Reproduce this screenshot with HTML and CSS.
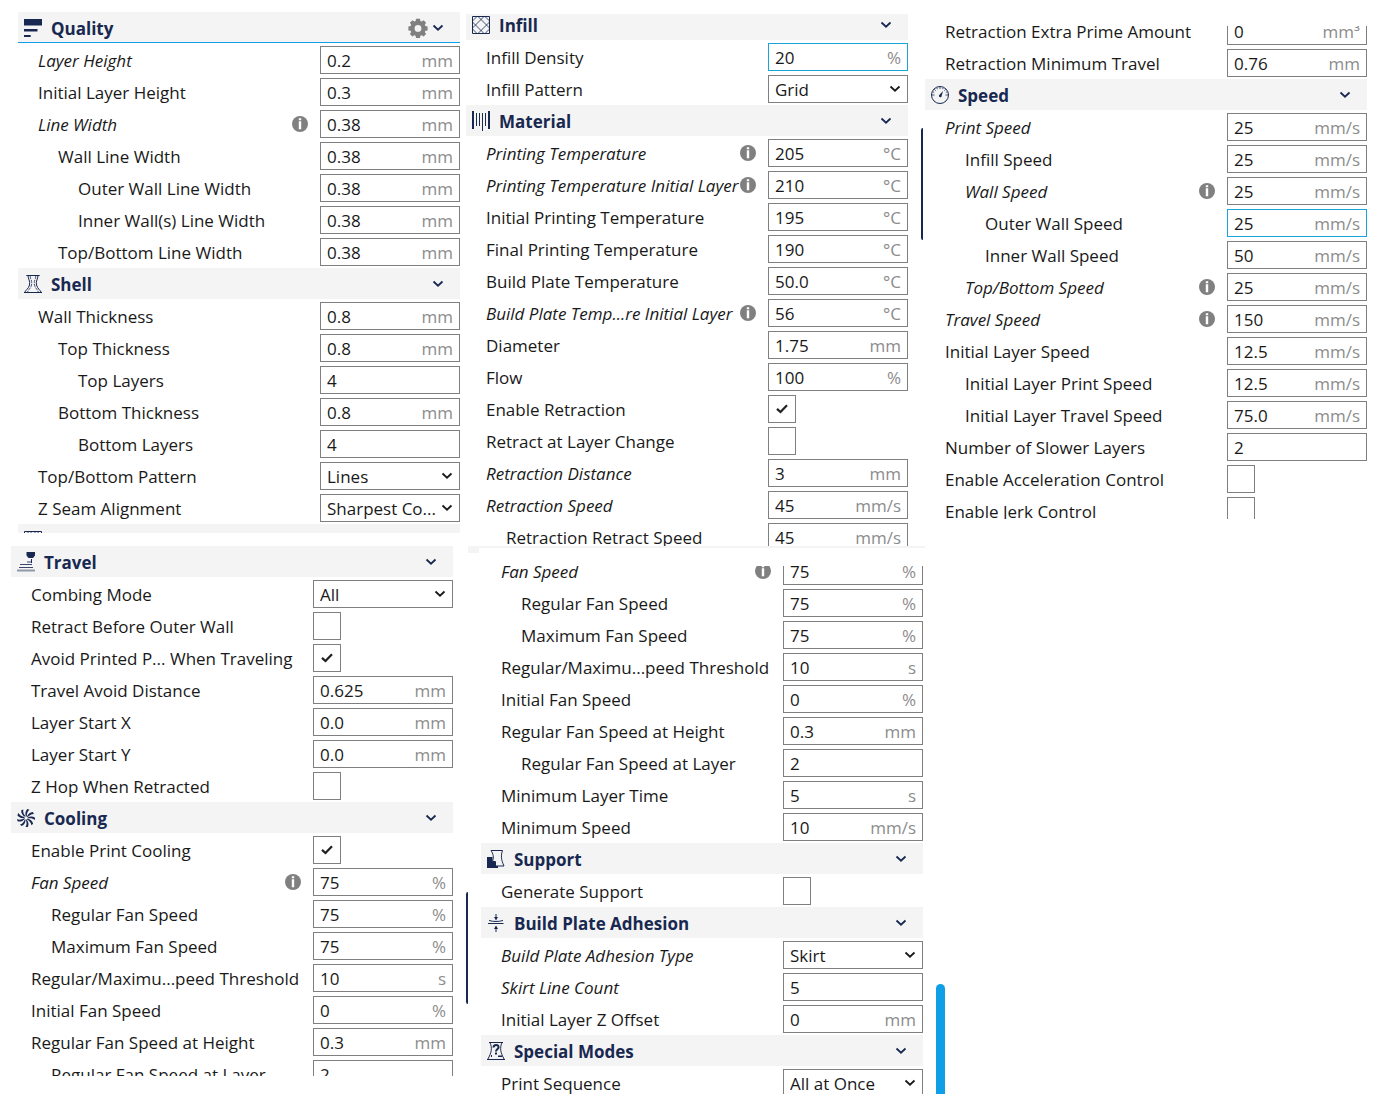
FILE: index.html
```html
<!DOCTYPE html>
<html lang="en">
<head>
<meta charset="utf-8">
<title>Print settings</title>
<link rel="stylesheet" href="styles.css">
</head>
<body>
<svg class="sprite" aria-hidden="true">
  <symbol id="chevron" viewBox="0 0 12 8"><path d="M1.500 1.500 6 5.700 10.500 1.500" fill="none" stroke="currentColor" stroke-width="1.800"/></symbol>
  <symbol id="check" viewBox="0 0 12 10"><path d="M1 4.800 4.500 8 11 1.200" fill="none" stroke="#222" stroke-width="2.300"/></symbol>
  <symbol id="info" viewBox="0 0 16 16"><circle cx="8" cy="8" r="8" fill="#808080"/><path d="M6.800 2.300h2.400v2H6.800zM6.800 5.300h2.400v8H6.800z" fill="#fff"/></symbol>
  <symbol id="gear" viewBox="0 0 20 20"><path fill="#808080" fill-rule="evenodd" d="M8 .8h4l.4 2.200 1.300.6 1.900-1.300 2.500 2.500-1.300 1.900.6 1.300 2.200.4v4l-2.200.4-.6 1.300 1.300 1.900-2.500 2.500-1.900-1.300-1.300.6-.4 2.200H8l-.4-2.200-1.300-.6-1.900 1.300L1.900 16l1.300-1.900-.6-1.300-2.200-.4v-4L2.600 8l.6-1.300L1.900 4.800l2.500-2.500 1.900 1.300L7.600 3zM10 7a3.400 3.400 0 1 0 0 6.800A3.400 3.400 0 0 0 10 7z"/></symbol>
  <symbol id="quality" viewBox="0 0 18 18"><path fill="currentColor" d="M0 0h18v6.500H0zM0 10h13.500v2.500H0zM0 16h6.700v2H0z"/></symbol>
  <symbol id="shell" viewBox="0 0 18 18"><g fill="none" stroke="currentColor"><path d="M2.300.5h13.400M0 17.500h18"/><path d="M4 .5C4 4 6.500 6 5.500 10S1.500 15 .7 17.500M14 .5c0 3.500-2.500 5.500-1.500 9.500s4 5 4.800 7.500"/><path d="M6.200 1c0 3 2.300 5 1.300 9S4.500 14 3.700 17M11.800 1c0 3-2.300 5-1.300 9s3 4 3.800 7" stroke-width=".8" stroke-dasharray="3 1"/></g></symbol>
  <symbol id="infill" viewBox="0 0 18 18"><g fill="none" stroke="currentColor"><path d="M.5.5h17v17H.5z"/><path d="M0 5.500 5.500 0M0 12.500 12.500 0M5.500 18 18 5.500M12.500 18 18 12.500M12.500 0 18 5.500M5.500 0 18 12.500M0 5.500 12.500 18M0 12.500 5.500 18" stroke-width=".8"/></g></symbol>
  <symbol id="material" viewBox="0 0 18 20"><path fill="currentColor" d="M0 0h2v18H0zM4 2h1v13H4zM7 2h1v13H7zM10 2h1v18h-1zM13 2h1v13h-1zM16 0h2v18h-2z"/></symbol>
  <symbol id="speed" viewBox="0 0 18 18"><g fill="none" stroke="currentColor"><circle cx="9" cy="9" r="8.500"/><path d="M9 1v2M1 9h2.500M14.500 9H17M3.300 3.300l1.400 1.400M14.700 3.300l-1.400 1.400M5.800 1.800l.5 1.400M12.200 1.800l-.5 1.400M1.800 5.800l1.400.5M16.200 5.800l-1.400.5" stroke-width=".8"/></g><path fill="currentColor" d="m12 5-1.300 4.800a1.400 1.400 0 1 1-2.200-1z"/></symbol>
  <symbol id="travel" viewBox="0 0 18 20"><path fill="currentColor" d="M9.500 0H18v3.500L16 6h-4.500l-2-2.500zM14 7h1v4h-1z"/><path fill="currentColor" d="M10 9.500h4v1h-4zM3 12h12v1H3zM2 15h14v1H2z" opacity=".85"/><path fill="currentColor" d="M0 17.500h18v2H0z" opacity=".45"/></symbol>
  <symbol id="cooling" viewBox="0 0 18 18"><path id="blade" fill="currentColor" d="M9 7.500C7.800 4.800 8.300 2 10.300 0l2.200.7C10.400 2.300 9.700 4.600 9.800 7.500z"/><use href="#blade" transform="rotate(40 9 9)"/><use href="#blade" transform="rotate(80 9 9)"/><use href="#blade" transform="rotate(120 9 9)"/><use href="#blade" transform="rotate(160 9 9)"/><use href="#blade" transform="rotate(200 9 9)"/><use href="#blade" transform="rotate(240 9 9)"/><use href="#blade" transform="rotate(280 9 9)"/><use href="#blade" transform="rotate(320 9 9)"/></symbol>
  <symbol id="support" viewBox="0 0 18 18"><path fill="currentColor" d="M0 7h5.500v4.500H8V16h3v2H0z"/><path fill="#f4f4f4" stroke="currentColor" d="M4 .5h11.500c-1.700 5-1.500 9 1.500 15.500H8.500v-4.500H5.500C7 7 6.300 4 4 .5z"/></symbol>
  <symbol id="adhesion" viewBox="0 0 18 18"><path fill="currentColor" d="M8.500 0h1v3H11L9 6.500 7 3h1.500zM8.500 18h1v-3H11L9 11.500 7 15h1.500z"/><path fill="none" stroke="currentColor" d="M2 6.500c4 1.300 10 1.300 14 0M1 9.500h15.500"/></symbol>
  <symbol id="special" viewBox="0 0 18 18"><g fill="none" stroke="currentColor"><path d="M2 .5h14M0 17.500h18"/><path d="M3 .5C5.500 6.500 4.500 10.500.7 17.500M15 .5c-2.500 6-1.500 10 2.300 17"/><path d="M6.500 5.500C6.500 2 12 2 11.500 5.500 11.200 7.500 9 7.200 9 9.500" stroke-width="2"/></g><path fill="currentColor" d="M8 10.500h2v2H8zM4 13h1v2H4zM11 13.500h4V15h-4z"/></symbol>
</svg>

<main class="page">
  <div class="column column-left">
    <div class="pane pane-quality">
      <form class="list">
        <header class="section active"><svg class="icon"><use href="#quality"/></svg><h2>Quality</h2><button type="button" class="gear" aria-label="Configure"><svg><use href="#gear"/></svg></button><button type="button" class="toggle" aria-label="Collapse"><svg><use href="#chevron"/></svg></button></header>
        <label class="row changed"><span class="name">Layer Height</span><span class="field"><input value="0.2"><span class="unit">mm</span></span></label>
        <label class="row"><span class="name">Initial Layer Height</span><span class="field"><input value="0.3"><span class="unit">mm</span></span></label>
        <label class="row changed"><span class="name">Line Width</span><svg class="info"><use href="#info"/></svg><span class="field"><input value="0.38"><span class="unit">mm</span></span></label>
        <label class="row sub"><span class="name">Wall Line Width</span><span class="field"><input value="0.38"><span class="unit">mm</span></span></label>
        <label class="row subsub"><span class="name">Outer Wall Line Width</span><span class="field"><input value="0.38"><span class="unit">mm</span></span></label>
        <label class="row subsub"><span class="name">Inner Wall(s) Line Width</span><span class="field"><input value="0.38"><span class="unit">mm</span></span></label>
        <label class="row sub"><span class="name">Top/Bottom Line Width</span><span class="field"><input value="0.38"><span class="unit">mm</span></span></label>
        <header class="section"><svg class="icon"><use href="#shell"/></svg><h2>Shell</h2><button type="button" class="toggle" aria-label="Collapse"><svg><use href="#chevron"/></svg></button></header>
        <label class="row"><span class="name">Wall Thickness</span><span class="field"><input value="0.8"><span class="unit">mm</span></span></label>
        <label class="row sub"><span class="name">Top Thickness</span><span class="field"><input value="0.8"><span class="unit">mm</span></span></label>
        <label class="row subsub"><span class="name">Top Layers</span><span class="field"><input value="4"></span></label>
        <label class="row sub"><span class="name">Bottom Thickness</span><span class="field"><input value="0.8"><span class="unit">mm</span></span></label>
        <label class="row subsub"><span class="name">Bottom Layers</span><span class="field"><input value="4"></span></label>
        <label class="row"><span class="name">Top/Bottom Pattern</span><span class="field"><select><option>Lines</option></select><svg class="arrow"><use href="#chevron"/></svg></span></label>
        <label class="row"><span class="name">Z Seam Alignment</span><span class="field"><select><option>Sharpest Co...</option></select><svg class="arrow"><use href="#chevron"/></svg></span></label>
        <header class="section"><svg class="icon"><use href="#infill"/></svg></header>
      </form>
    </div>

    <div class="pane pane-travel">
      <form class="list">
        <header class="section"><svg class="icon tall"><use href="#travel"/></svg><h2>Travel</h2><button type="button" class="toggle" aria-label="Collapse"><svg><use href="#chevron"/></svg></button></header>
        <label class="row"><span class="name">Combing Mode</span><span class="field"><select><option>All</option></select><svg class="arrow"><use href="#chevron"/></svg></span></label>
        <label class="row"><span class="name">Retract Before Outer Wall</span><span class="field"><input type="checkbox"><svg class="tick"><use href="#check"/></svg></span></label>
        <label class="row"><span class="name">Avoid Printed P... When Traveling</span><span class="field"><input type="checkbox" checked><svg class="tick"><use href="#check"/></svg></span></label>
        <label class="row"><span class="name">Travel Avoid Distance</span><span class="field"><input value="0.625"><span class="unit">mm</span></span></label>
        <label class="row"><span class="name">Layer Start X</span><span class="field"><input value="0.0"><span class="unit">mm</span></span></label>
        <label class="row"><span class="name">Layer Start Y</span><span class="field"><input value="0.0"><span class="unit">mm</span></span></label>
        <label class="row"><span class="name">Z Hop When Retracted</span><span class="field"><input type="checkbox"><svg class="tick"><use href="#check"/></svg></span></label>
        <header class="section"><svg class="icon"><use href="#cooling"/></svg><h2>Cooling</h2><button type="button" class="toggle" aria-label="Collapse"><svg><use href="#chevron"/></svg></button></header>
        <label class="row"><span class="name">Enable Print Cooling</span><span class="field"><input type="checkbox" checked><svg class="tick"><use href="#check"/></svg></span></label>
        <label class="row changed"><span class="name">Fan Speed</span><svg class="info"><use href="#info"/></svg><span class="field"><input value="75"><span class="unit">%</span></span></label>
        <label class="row sub"><span class="name">Regular Fan Speed</span><span class="field"><input value="75"><span class="unit">%</span></span></label>
        <label class="row sub"><span class="name">Maximum Fan Speed</span><span class="field"><input value="75"><span class="unit">%</span></span></label>
        <label class="row"><span class="name">Regular/Maximu...peed Threshold</span><span class="field"><input value="10"><span class="unit">s</span></span></label>
        <label class="row"><span class="name">Initial Fan Speed</span><span class="field"><input value="0"><span class="unit">%</span></span></label>
        <label class="row"><span class="name">Regular Fan Speed at Height</span><span class="field"><input value="0.3"><span class="unit">mm</span></span></label>
        <label class="row sub"><span class="name">Regular Fan Speed at Layer</span><span class="field"><input value="2"></span></label>
      </form>
      <div class="thumb"></div>
    </div>
  </div>

  <div class="column column-middle">
    <div class="pane pane-material">
      <form class="list">
        <header class="section"><svg class="icon"><use href="#infill"/></svg><h2>Infill</h2><button type="button" class="toggle" aria-label="Collapse"><svg><use href="#chevron"/></svg></button></header>
        <label class="row"><span class="name">Infill Density</span><span class="field hover"><input value="20"><span class="unit">%</span></span></label>
        <label class="row"><span class="name">Infill Pattern</span><span class="field"><select><option>Grid</option></select><svg class="arrow"><use href="#chevron"/></svg></span></label>
        <header class="section"><svg class="icon tall"><use href="#material"/></svg><h2>Material</h2><button type="button" class="toggle" aria-label="Collapse"><svg><use href="#chevron"/></svg></button></header>
        <label class="row changed"><span class="name">Printing Temperature</span><svg class="info"><use href="#info"/></svg><span class="field"><input value="205"><span class="unit">°C</span></span></label>
        <label class="row changed"><span class="name">Printing Temperature Initial Layer</span><svg class="info"><use href="#info"/></svg><span class="field"><input value="210"><span class="unit">°C</span></span></label>
        <label class="row"><span class="name">Initial Printing Temperature</span><span class="field"><input value="195"><span class="unit">°C</span></span></label>
        <label class="row"><span class="name">Final Printing Temperature</span><span class="field"><input value="190"><span class="unit">°C</span></span></label>
        <label class="row"><span class="name">Build Plate Temperature</span><span class="field"><input value="50.0"><span class="unit">°C</span></span></label>
        <label class="row changed"><span class="name">Build Plate Temp...re Initial Layer</span><svg class="info"><use href="#info"/></svg><span class="field"><input value="56"><span class="unit">°C</span></span></label>
        <label class="row"><span class="name">Diameter</span><span class="field"><input value="1.75"><span class="unit">mm</span></span></label>
        <label class="row"><span class="name">Flow</span><span class="field"><input value="100"><span class="unit">%</span></span></label>
        <label class="row"><span class="name">Enable Retraction</span><span class="field"><input type="checkbox" checked><svg class="tick"><use href="#check"/></svg></span></label>
        <label class="row"><span class="name">Retract at Layer Change</span><span class="field"><input type="checkbox"><svg class="tick"><use href="#check"/></svg></span></label>
        <label class="row changed"><span class="name">Retraction Distance</span><span class="field"><input value="3"><span class="unit">mm</span></span></label>
        <label class="row changed"><span class="name">Retraction Speed</span><span class="field"><input value="45"><span class="unit">mm/s</span></span></label>
        <label class="row sub"><span class="name">Retraction Retract Speed</span><span class="field"><input value="45"><span class="unit">mm/s</span></span></label>
      </form>
      <div class="thumb"></div>
    </div>

    <div class="seam"></div>

    <div class="pane pane-support">
      <form class="list">
        <label class="row changed"><span class="name">Fan Speed</span><svg class="info"><use href="#info"/></svg><span class="field"><input value="75"><span class="unit">%</span></span></label>
        <label class="row sub"><span class="name">Regular Fan Speed</span><span class="field"><input value="75"><span class="unit">%</span></span></label>
        <label class="row sub"><span class="name">Maximum Fan Speed</span><span class="field"><input value="75"><span class="unit">%</span></span></label>
        <label class="row"><span class="name">Regular/Maximu...peed Threshold</span><span class="field"><input value="10"><span class="unit">s</span></span></label>
        <label class="row"><span class="name">Initial Fan Speed</span><span class="field"><input value="0"><span class="unit">%</span></span></label>
        <label class="row"><span class="name">Regular Fan Speed at Height</span><span class="field"><input value="0.3"><span class="unit">mm</span></span></label>
        <label class="row sub"><span class="name">Regular Fan Speed at Layer</span><span class="field"><input value="2"></span></label>
        <label class="row"><span class="name">Minimum Layer Time</span><span class="field"><input value="5"><span class="unit">s</span></span></label>
        <label class="row"><span class="name">Minimum Speed</span><span class="field"><input value="10"><span class="unit">mm/s</span></span></label>
        <header class="section"><svg class="icon"><use href="#support"/></svg><h2>Support</h2><button type="button" class="toggle" aria-label="Collapse"><svg><use href="#chevron"/></svg></button></header>
        <label class="row"><span class="name">Generate Support</span><span class="field"><input type="checkbox"><svg class="tick"><use href="#check"/></svg></span></label>
        <header class="section"><svg class="icon"><use href="#adhesion"/></svg><h2>Build Plate Adhesion</h2><button type="button" class="toggle" aria-label="Collapse"><svg><use href="#chevron"/></svg></button></header>
        <label class="row changed"><span class="name">Build Plate Adhesion Type</span><span class="field"><select><option>Skirt</option></select><svg class="arrow"><use href="#chevron"/></svg></span></label>
        <label class="row changed"><span class="name">Skirt Line Count</span><span class="field"><input value="5"></span></label>
        <label class="row"><span class="name">Initial Layer Z Offset</span><span class="field"><input value="0"><span class="unit">mm</span></span></label>
        <header class="section"><svg class="icon"><use href="#special"/></svg><h2>Special Modes</h2><button type="button" class="toggle" aria-label="Collapse"><svg><use href="#chevron"/></svg></button></header>
        <label class="row"><span class="name">Print Sequence</span><span class="field"><select><option>All at Once</option></select><svg class="arrow"><use href="#chevron"/></svg></span></label>
      </form>
      <div class="thumb"></div>
    </div>
  </div>

  <div class="column column-right">
    <div class="pane pane-speed">
      <form class="list">
        <label class="row"><span class="name">Retraction Extra Prime Amount</span><span class="field"><input value="0"><span class="unit">mm³</span></span></label>
        <label class="row"><span class="name">Retraction Minimum Travel</span><span class="field"><input value="0.76"><span class="unit">mm</span></span></label>
        <header class="section"><svg class="icon"><use href="#speed"/></svg><h2>Speed</h2><button type="button" class="toggle" aria-label="Collapse"><svg><use href="#chevron"/></svg></button></header>
        <label class="row changed"><span class="name">Print Speed</span><span class="field"><input value="25"><span class="unit">mm/s</span></span></label>
        <label class="row sub"><span class="name">Infill Speed</span><span class="field"><input value="25"><span class="unit">mm/s</span></span></label>
        <label class="row sub changed"><span class="name">Wall Speed</span><svg class="info"><use href="#info"/></svg><span class="field"><input value="25"><span class="unit">mm/s</span></span></label>
        <label class="row subsub"><span class="name">Outer Wall Speed</span><span class="field hover"><input value="25"><span class="unit">mm/s</span></span></label>
        <label class="row subsub"><span class="name">Inner Wall Speed</span><span class="field"><input value="50"><span class="unit">mm/s</span></span></label>
        <label class="row sub changed"><span class="name">Top/Bottom Speed</span><svg class="info"><use href="#info"/></svg><span class="field"><input value="25"><span class="unit">mm/s</span></span></label>
        <label class="row changed"><span class="name">Travel Speed</span><svg class="info"><use href="#info"/></svg><span class="field"><input value="150"><span class="unit">mm/s</span></span></label>
        <label class="row"><span class="name">Initial Layer Speed</span><span class="field"><input value="12.5"><span class="unit">mm/s</span></span></label>
        <label class="row sub"><span class="name">Initial Layer Print Speed</span><span class="field"><input value="12.5"><span class="unit">mm/s</span></span></label>
        <label class="row sub"><span class="name">Initial Layer Travel Speed</span><span class="field"><input value="75.0"><span class="unit">mm/s</span></span></label>
        <label class="row"><span class="name">Number of Slower Layers</span><span class="field"><input value="2"></span></label>
        <label class="row"><span class="name">Enable Acceleration Control</span><span class="field"><input type="checkbox"><svg class="tick"><use href="#check"/></svg></span></label>
        <label class="row"><span class="name">Enable Jerk Control</span><span class="field"><input type="checkbox"><svg class="tick"><use href="#check"/></svg></span></label>
      </form>
    </div>
  </div>
</main>
</body>
</html>
```
FILE: styles.css
```css
* { box-sizing: border-box; }

body {
  margin: 0;
  background: #fff;
  color: #191919;
  font: 17px/24px "Open Sans", "Noto Sans", sans-serif;
}

.sprite { display: none; }

.page {
  display: grid;
  grid-template-columns: 455fr 459fr 442fr;
  padding: 0 33px 0 11px;
}

.column {
  display: flex;
  flex-direction: column;
  min-width: 0;
}

.column-left { padding-top: 12px; gap: 13px; }
.column-middle { padding-top: 14px; }
.column-right { padding-top: 26px; }

/* Each pane is a scrolled viewport on its own settings list */
.pane { position: relative; }
.list { overflow: hidden; }

.pane-quality { margin: 0 6px 0 7px; }
.pane-quality .list { height: 521px; }

.pane-travel { margin-right: 13px; }
.pane-travel .list { height: 530px; }

.pane-material { margin-right: 17px; }
.pane-material .list { height: 532px; }
.pane-material .list > :first-child { margin-top: -5px; }

.pane-support { margin: 0 2px 0 15px; }
.pane-support .list { height: 528px; }
.pane-support .list > :first-child,
.pane-speed .list > :first-child { margin-top: -11px; }

.pane-speed .list { height: 493px; }

.seam {
  height: 20px;
  margin-left: 2px;
  border-top: 2px solid #f4f4f4;
}
.seam::before {
  content: "";
  display: block;
  width: 11px;
  height: 5px;
  background: #f4f4f4;
}

/* Scroll thumb beside a pane */
.thumb {
  position: absolute;
  left: 100%;
  width: 2px;
  height: 112px;
  margin-left: 13px;
  border-radius: 2px 0 0 2px;
  background: #182850;
}
.pane-travel .thumb { top: 346px; }
.pane-material .thumb { top: 114px; }
.pane-support .thumb {
  bottom: 0;
  width: 9px;
  height: 110px;
  border-radius: 5px 5px 0 0;
  background: #0f9fe6;
}

.section {
  display: flex;
  align-items: center;
  height: 31px;
  margin-bottom: 1px;
  padding: 0 16px 0 6px;
  background: #f4f4f4;
  color: #182850;
}
.section.active { box-shadow: inset 0 -1px #0f9fe6; }

.section h2 {
  flex: 1;
  margin: 0 0 0 9px;
  padding-top: 2px;
  font-size: 17px;
  font-weight: 700;
  line-height: 24px;
}

.icon { width: 18px; height: 18px; }
.icon.tall { height: 20px; }

button {
  display: flex;
  padding: 0;
  border: 0;
  background: none;
  color: inherit;
}
.gear svg { width: 20px; height: 20px; }
.gear { margin-right: 4px; }
.toggle svg,
.arrow { width: 12px; height: 8px; }

.row {
  display: flex;
  align-items: center;
  height: 32px;
  padding-left: 20px;
}
.row.sub { padding-left: 40px; }
.row.subsub { padding-left: 60px; }

.name {
  flex: 1;
  min-width: 0;
  padding-top: 2px;
  white-space: nowrap;
}
.changed .name { font-style: italic; }

.info {
  width: 16px;
  height: 16px;
  margin-right: 12px;
}

.field {
  display: grid;
  flex: 0 0 140px;
  align-items: center;
  height: 28px;
}
.field > * { grid-area: 1 / 1; }

.field input,
.field select {
  width: 100%;
  height: 28px;
  margin: 0;
  padding: 0 6px;
  border: 1px solid #7f7f7f;
  border-radius: 0;
  background: #fff;
  color: inherit;
  font: inherit;
  appearance: none;
}
.field select { padding-top: 2px; }
.field.hover input { border-color: #19a5d8; }
.field input[type="checkbox"] { width: 28px; }

.unit {
  justify-self: end;
  margin-right: 7px;
  padding-top: 2px;
  color: #8c8c8c;
}

.arrow {
  justify-self: end;
  margin-right: 7px;
}

.tick {
  width: 12px;
  height: 10px;
  margin-left: 8px;
  visibility: hidden;
}
:checked + .tick { visibility: visible; }
```
